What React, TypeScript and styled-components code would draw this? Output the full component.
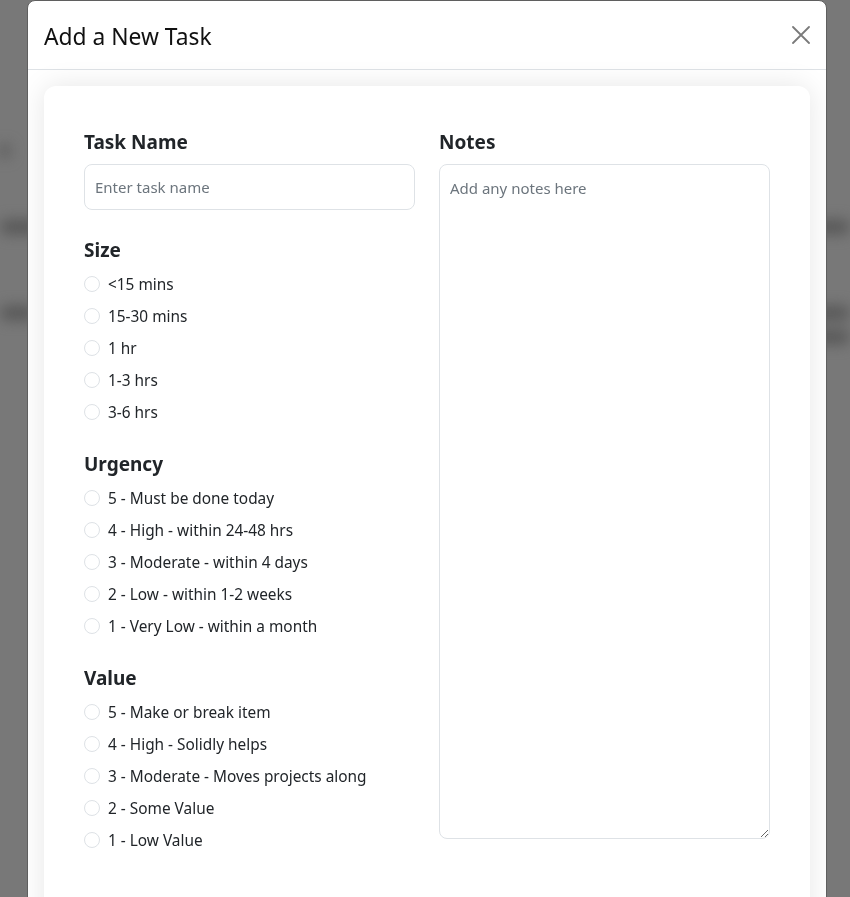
import React from "react";
import styled, { createGlobalStyle } from "styled-components";

const GlobalStyle = createGlobalStyle`
  html, body { margin: 0; padding: 0; }
  body {
    background: #787878;
    font-family: "Noto Sans", "Open Sans", "DejaVu Sans", sans-serif;
    color: #212529;
    overflow: hidden;
  }
  * { box-sizing: border-box; }
`;

const Backdrop = styled.div`
  position: fixed;
  inset: 0;
  background: #787878;
  overflow: hidden;
`;

const GhostPage = styled.div`
  display: flex;
  flex-direction: column;
  filter: blur(7px);
  padding-top: 144px;
`;

const GhostRow = styled.div<{ $gap: number }>`
  display: flex;
  justify-content: space-between;
  margin-top: ${(p) => p.$gap}px;
  height: 14px;
`;

const GhostBlob = styled.div<{ $w: number }>`
  width: ${(p) => p.$w}px;
  height: 14px;
  background: #565656;
  border-radius: 7px;
`;

const Modal = styled.div`
  position: relative;
  z-index: 1;
  margin: 0 0 0 27px;
  width: 800px;
  background: #fff;
  border: 1px solid #5f5f5f;
  border-radius: 8px;
  overflow: hidden;
`;

const Header = styled.div`
  display: flex;
  align-items: center;
  justify-content: space-between;
  height: 69px;
  padding: 3px 15px 0 16px;
  border-bottom: 1px solid #dee2e6;
`;

const Title = styled.h5`
  margin: 0;
  font-size: 22.8px;
  font-weight: 400;
  line-height: 1.2;
  color: #111;
`;

const CloseButton = styled.button`
  border: none;
  background: transparent;
  padding: 0;
  width: 20px;
  height: 20px;
  margin-top: -3px;
  display: flex;
  align-items: center;
  justify-content: center;
  cursor: pointer;
`;

const Body = styled.div`
  padding: 16px 16px 0;
`;

const Card = styled.div`
  background: #fff;
  border-radius: 12px;
  box-shadow: 0 0 28px rgba(0, 0, 0, 0.1);
  padding: 44px 40px 80px;
  display: grid;
  grid-template-columns: 1fr 1fr;
  column-gap: 24px;
`;

const Column = styled.div`
  display: flex;
  flex-direction: column;
  gap: 28px;
`;

const Section = styled.div`
  display: flex;
  flex-direction: column;
`;

const Heading = styled.div`
  font-size: 19px;
  font-weight: 700;
  line-height: 24px;
  margin-bottom: 10px;
  color: #212529;
`;

const TextInput = styled.input`
  height: 46px;
  width: 100%;
  border: 1px solid #dee2e6;
  border-radius: 8px;
  padding: 0 10px;
  font-family: inherit;
  font-size: 15px;
  color: #212529;
  &::placeholder { color: #6c757d; }
  outline: none;
`;

const NotesArea = styled.textarea`
  height: 675px;
  width: 100%;
  border: 1px solid #dee2e6;
  border-radius: 8px;
  padding: 12px 10px;
  font-family: inherit;
  font-size: 15px;
  line-height: 1.5;
  color: #212529;
  &::placeholder { color: #6c757d; }
  outline: none;
`;

const OptionList = styled.div`
  display: flex;
  flex-direction: column;
  gap: 8px;
`;

const Option = styled.label`
  display: flex;
  align-items: center;
  gap: 8px;
  height: 24px;
  font-size: 15.4px;
  color: #212529;
  cursor: pointer;
`;

const Radio = styled.span`
  width: 16px;
  height: 16px;
  border-radius: 50%;
  border: 1px solid #dee2e6;
  background: #fff;
  flex: none;
`;

const sizes = ["<15 mins", "15-30 mins", "1 hr", "1-3 hrs", "3-6 hrs"];
const urgencies = [
  "5 - Must be done today",
  "4 - High - within 24-48 hrs",
  "3 - Moderate - within 4 days",
  "2 - Low - within 1-2 weeks",
  "1 - Very Low - within a month",
];
const values = [
  "5 - Make or break item",
  "4 - High - Solidly helps",
  "3 - Moderate - Moves projects along",
  "2 - Some Value",
  "1 - Low Value",
];

const RadioGroup = ({ title, options }: { title: string; options: string[] }) => (
  <Section>
    <Heading>{title}</Heading>
    <OptionList>
      {options.map((o) => (
        <Option key={o}>
          <Radio />
          {o}
        </Option>
      ))}
    </OptionList>
  </Section>
);

export default function App() {
  return (
    <>
      <GlobalStyle />
      <Backdrop>
        <GhostPage>
          <GhostRow $gap={0}>
            <GhostBlob $w={10} />
            <span />
          </GhostRow>
          <GhostRow $gap={62}>
            <GhostBlob $w={40} />
            <GhostBlob $w={40} />
          </GhostRow>
          <GhostRow $gap={72}>
            <GhostBlob $w={36} />
            <GhostBlob $w={40} />
          </GhostRow>
          <GhostRow $gap={10}>
            <span />
            <GhostBlob $w={40} />
          </GhostRow>
        </GhostPage>
      </Backdrop>
      <Modal>
        <Header>
          <Title>Add a New Task</Title>
          <CloseButton aria-label="Close">
            <svg width="18" height="18" viewBox="0 0 18 18">
              <path d="M1 1L17 17M17 1L1 17" stroke="#7a7a7a" strokeWidth="1.8" strokeLinecap="round" />
            </svg>
          </CloseButton>
        </Header>
        <Body>
          <Card>
            <Column>
              <Section>
                <Heading>Task Name</Heading>
                <TextInput placeholder="Enter task name" />
              </Section>
              <RadioGroup title="Size" options={sizes} />
              <RadioGroup title="Urgency" options={urgencies} />
              <RadioGroup title="Value" options={values} />
            </Column>
            <Column>
              <Section>
                <Heading>Notes</Heading>
                <NotesArea placeholder="Add any notes here" />
              </Section>
            </Column>
          </Card>
        </Body>
      </Modal>
    </>
  );
}
